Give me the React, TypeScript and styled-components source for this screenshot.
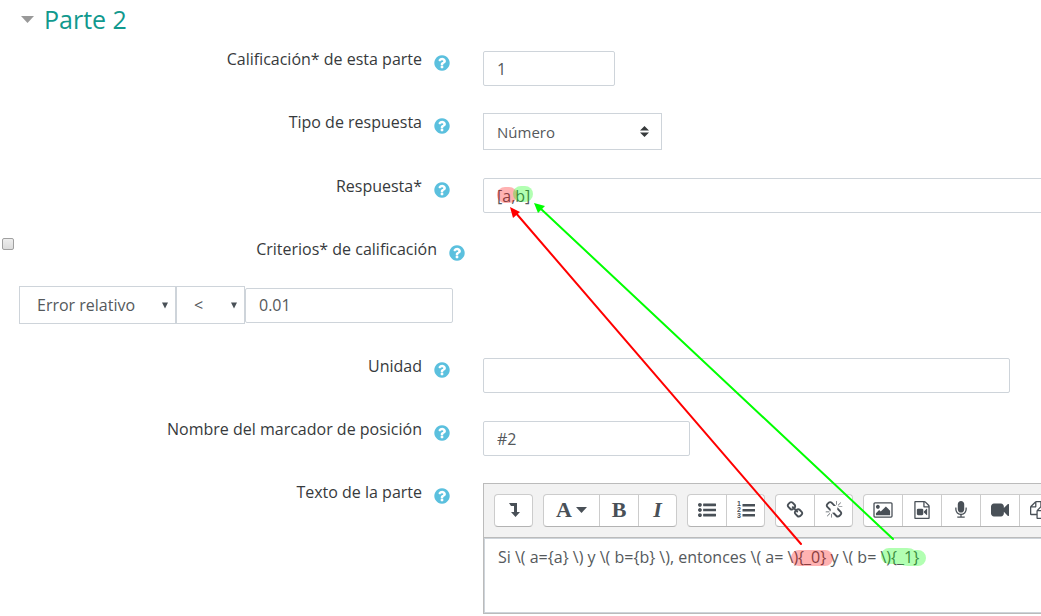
import React from "react";
import styled, { createGlobalStyle } from "styled-components";

const GlobalStyle = createGlobalStyle`
  *, *::before, *::after { box-sizing: border-box; }
  body {
    margin: 0;
    background: #fff;
    color: #373a3c;
    font: 16px/24px "Open Sans", sans-serif;
    overflow: hidden;
  }
`;

const Page = styled.main`
  position: relative;
  overflow: hidden;
  padding-bottom: 3px;
`;

const SectionTitle = styled.h3`
  margin: 0;
  font-size: 25px;
  line-height: 38px;
  font-weight: 400;
`;

const SectionToggle = styled.a`
  display: flex;
  align-items: center;
  gap: 10px;
  padding-left: 21px;
  color: #11998e;
  text-decoration: none;
`;

const Fields = styled.form`
  display: flex;
  flex-direction: column;
  gap: 25px;
  padding-top: 10px;
`;

const Row = styled.div`
  display: grid;
  grid-template-columns: 450px minmax(0, 1fr);
  column-gap: 33px;
  align-items: start;
`;

const LabelCell = styled.div`
  display: flex;
  justify-content: flex-end;
  gap: 12px;
`;

const Label = styled.label`
  line-height: 22px;
`;

const HelpButton = styled.button`
  display: flex;
  width: 16px;
  height: 24px;
  margin: 3px 0 0;
  padding: 0;
  border: 0;
  background: none;
  align-items: center;
  justify-content: center;
  color: #5bc0de;
`;

const Control = styled.div<{ $bleed?: boolean }>`
  display: flex;
  align-items: flex-end;
  min-height: 38px;
  padding-top: 2px;
  margin-right: ${(p) => (p.$bleed ? "-24px" : "0")};
`;

const TextInput = styled.input<{ $width: string }>`
  width: ${(p) => p.$width};
  max-width: 100%;
  height: 35px;
  padding: 0 13px;
  border: 1px solid #ced4da;
  border-radius: 2px;
  background: #fff;
  color: #55595c;
  font: 16px "Open Sans", sans-serif;
`;

const SelectWrap = styled.div<{ $width: string }>`
  display: grid;
  grid-template-columns: minmax(0, 1fr);
  align-items: center;
  width: ${(p) => p.$width};

  > * { grid-area: 1 / 1; }
  > svg { justify-self: end; pointer-events: none; }
`;

const Select = styled.select<{ $pad: number }>`
  appearance: none;
  width: 100%;
  height: 37px;
  padding: 0 ${(p) => p.$pad}px;
  border: 1px solid #ced4da;
  border-radius: 0;
  background: #fff;
  color: #55595c;
  font: 15px "Open Sans", sans-serif;
`;

const PlainSelect = styled(Select)`
  height: 38px;
  font-size: 16px;
`;

const SortMark = styled.svg`
  margin-right: 13px;
`;

const DropMark = styled.svg<{ $right: number }>`
  margin-right: ${(p) => p.$right}px;
`;

const Criteria = styled.div`
  display: flex;
  flex-direction: column;
  gap: 24px;
  padding-bottom: 6px;
`;

const CriteriaHead = styled.div`
  display: flex;
  justify-content: space-between;
  align-items: flex-start;
  width: 465px;
  height: 24px;
  padding-left: 2px;
`;

const Tick = styled.input`
  appearance: none;
  width: 12px;
  height: 12px;
  margin: 0;
  border: 1px solid #a0a0a0;
  border-radius: 2px;
  background: linear-gradient(#eee, #dcdcdc);
`;

const CriteriaFields = styled.div`
  display: flex;
  align-items: center;
  padding-left: 19px;
`;

const Editor = styled.div`
  width: 100%;
  border: 1px solid #bbb;
`;

const Toolbar = styled.div`
  display: flex;
  gap: 10px;
  padding: 10px 0 10px 10px;
  border-bottom: 1px solid #bbb;
  background: #f2f2f2;
  overflow: hidden;
`;

const ToolGroup = styled.div`
  display: flex;
  flex: none;
  border: 1px solid #ccc;
  border-bottom-color: #b3b3b3;
  border-radius: 4px;
  background: #fff;
`;

const Tool = styled.button<{ $wide?: boolean }>`
  display: flex;
  align-items: center;
  justify-content: center;
  gap: 4px;
  box-sizing: content-box;
  width: ${(p) => (p.$wide ? 55 : 38)}px;
  height: 29px;
  padding: 0 0 2px;
  border: 0;
  background: none;
  color: #495057;

  &:last-child { width: 37px; }
  & + & { border-left: 1px solid #ccc; }
`;

const Letter = styled.span<{ $italic?: boolean }>`
  font: bold 22px/24px "Liberation Serif", serif;
  font-style: ${(p) => (p.$italic ? "italic" : "normal")};
`;

const EditArea = styled.div`
  height: 75px;
  padding: 6px 13px;
  border: 1px solid #ced4da;
  color: #55595c;
  line-height: 24px;
  white-space: nowrap;
  overflow: hidden;
`;

const Annotations = styled.svg`
  position: absolute;
  left: 0;
  top: 0;
  pointer-events: none;
`;

const PATHS = {
  help: "M1024 1376v-192q0-14-9-23t-23-9h-192q-14 0-23 9t-9 23v192q0 14 9 23t23 9h192q14 0 23-9t9-23zm256-672q0-88-55.5-163t-138.5-116-170-41q-243 0-371 213-15 24 8 42l132 100q7 6 19 6 16 0 25-12 53-68 86-92 34-24 86-24 48 0 85.5 26t37.5 59q0 38-20 61t-68 45q-63 28-115.5 86.5t-52.5 125.5v36q0 14 9 23t23 9h192q14 0 23-9t9-23q0-19 21.5-49.5t54.5-49.5q32-18 49-28.5t46-35 44.5-48 28-60.5 12.5-81zm384 192q0 209-103 385.5t-279.5 279.5-385.5 103-385.5-103-279.5-279.5-103-385.5 103-385.5 279.5-279.5 385.5-103 385.5 103 279.5 279.5 103 385.5z",
  bullets: "M384 1408q0 80-56 136t-136 56-136-56-56-136 56-136 136-56 136 56 56 136zm0-512q0 80-56 136t-136 56-136-56-56-136 56-136 136-56 136 56 56 136zm1408 416v192q0 13-9.5 22.5t-22.5 9.5h-1216q-13 0-22.5-9.5t-9.5-22.5v-192q0-13 9.5-22.5t22.5-9.5h1216q13 0 22.5 9.5t9.5 22.5zm-1408-928q0 80-56 136t-136 56-136-56-56-136 56-136 136-56 136 56 56 136zm1408 416v192q0 13-9.5 22.5t-22.5 9.5h-1216q-13 0-22.5-9.5t-9.5-22.5v-192q0-13 9.5-22.5t22.5-9.5h1216q13 0 22.5 9.5t9.5 22.5zm0-512v192q0 13-9.5 22.5t-22.5 9.5h-1216q-13 0-22.5-9.5t-9.5-22.5v-192q0-13 9.5-22.5t22.5-9.5h1216q13 0 22.5 9.5t9.5 22.5z",
  link: "M1520 1216q0-40-28-68l-208-208q-28-28-68-28-42 0-72 32 3 3 19 18.5t21.5 21.5 15 19 13 25.5 3.5 27.5q0 40-28 68t-68 28q-15 0-27.5-3.5t-25.5-13-19-15-21.5-21.5-18.5-19q-33 31-33 73 0 40 28 68l206 207q27 27 68 27 40 0 68-26l147-146q28-28 28-67zm-703-705q0-40-28-68l-206-207q-28-28-68-28-39 0-68 27l-147 146q-28 28-28 67 0 40 28 68l208 208q27 27 68 27 42 0 72-31-3-3-19-18.5t-21.5-21.5-15-19-13-25.5-3.5-27.5q0-40 28-68t68-28q15 0 27.5 3.5t25.5 13 19 15 21.5 21.5 18.5 19q33-31 33-73zm895 705q0 120-85 203l-147 146q-83 83-203 83-121 0-204-85l-206-207q-83-83-83-203 0-123 88-209l-88-88q-86 88-208 88-120 0-204-84l-208-208q-84-84-84-204t85-203l147-146q83-83 203-83 121 0 204 85l206 207q83 83 83 203 0 123-88 209l88 88q86-88 208-88 120 0 204 84l208 208q84 84 84 204z",
  unlink: "M503 1271l-256 256q-10 9-23 9-12 0-23-9-9-10-9-23t9-23l256-256q10-9 23-9t23 9q9 10 9 23t-9 23zm169 41v320q0 14-9 23t-23 9-23-9-9-23v-320q0-14 9-23t23-9 23 9 9 23zm-224-224q0 14-9 23t-23 9h-320q-14 0-23-9t-9-23 9-23 23-9h320q14 0 23 9t9 23zm1264 128q0 120-85 203l-147 146q-83 83-203 83-121 0-204-85l-334-335q-21-21-42-56l239-18 273 274q28 28 68 27.5t68-27.5l147-146q28-28 28-67 0-40-28-68l-274-275 18-239q35 21 56 42l336 336q84 86 84 204zm-617-724l-239 18-273-274q-28-28-68-28-39 0-68 27l-147 146q-28 28-28 67 0 40 28 68l274 274-18 240q-35-21-56-42l-336-336q-84-86-84-204 0-120 85-203l147-146q83-83 203-83 121 0 204 85l334 335q21 21 42 56zm633 84q0 14-9 23t-23 9h-320q-14 0-23-9t-9-23 9-23 23-9h320q14 0 23 9t9 23zm-544-544v320q0 14-9 23t-23 9-23-9-9-23v-320q0-14 9-23t23-9 23 9 9 23zm407 151l-256 256q-11 9-23 9t-23-9q-9-10-9-23t9-23l256-256q10-9 23-9t23 9q9 10 9 23t-9 23z",
  picture: "M576 576q0 80-56 136t-136 56-136-56-56-136 56-136 136-56 136 56 56 136zm1024 384v448h-1408v-192l320-320 160 160 512-512zm96-704h-1600q-13 0-22.5 9.5t-9.5 22.5v1216q0 13 9.5 22.5t22.5 9.5h1600q13 0 22.5-9.5t9.5-22.5v-1216q0-13-9.5-22.5t-22.5-9.5zm160 32v1216q0 66-47 113t-113 47h-1600q-66 0-113-47t-47-113v-1216q0-66 47-113t113-47h1600q66 0 113 47t47 113z",
  mediaFile: "M1596 380q28 28 48 76t20 88v1152q0 40-28 68t-68 28h-1344q-40 0-68-28t-28-68v-1600q0-40 28-68t68-28h896q40 0 88 20t76 48zm-444-244v376h376q-10-29-22-41l-313-313q-12-12-41-22zm384 1528v-1024h-416q-40 0-68-28t-28-68v-416h-768v1536h1280zm-640-896q52 0 90 38t38 90v384q0 52-38 90t-90 38h-384q-52 0-90-38t-38-90v-384q0-52 38-90t90-38h384zm492 2q20 8 20 30v576q0 22-20 30-8 2-12 2-14 0-23-9l-265-266v-90l265-266q9-9 23-9 4 0 12 2z",
  microphone: "M1472 704v128q0 221-147.5 384.5t-364.5 187.5v132h256q26 0 45 19t19 45-19 45-45 19h-640q-26 0-45-19t-19-45 19-45 45-19h256v-132q-217-24-364.5-187.5t-147.5-384.5v-128q0-26 19-45t45-19 45 19 19 45v128q0 185 131.5 316.5t316.5 131.5 316.5-131.5 131.5-316.5v-128q0-26 19-45t45-19 45 19 19 45zm-256-384v512q0 132-94 226t-226 94-226-94-94-226v-512q0-132 94-226t226-94 226 94 94 226z",
  camera: "M1792 352v1088q0 42-39 59-13 5-25 5-27 0-45-19l-403-403v166q0 119-84.5 203.5t-203.5 84.5h-704q-119 0-203.5-84.5t-84.5-203.5v-704q0-119 84.5-203.5t203.5-84.5h704q119 0 203.5 84.5t84.5 203.5v165l403-402q18-19 45-19 12 0 25 5 39 17 39 59z",
  files: "M1696 384q40 0 68 28t28 68v1216q0 40-28 68t-68 28h-960q-40 0-68-28t-28-68v-288h-544q-40 0-68-28t-28-68v-672q0-40 20-88t48-76l408-408q28-28 76-48t88-20h416q40 0 68 28t28 68v328q68-40 128-40h416zm-544 213l-299 299h299v-299zm-640-384l-299 299h299v-299zm196 647l316-316v-416h-384v416q0 40-28 68t-68 28h-416v640h512v-256q0-40 20-88t48-76zm956 804v-1152h-384v416q0 40-28 68t-68 28h-416v640h896z",
};

function Icon({ name }: { name: keyof typeof PATHS }) {
  const wide = name === "picture";
  return (
    <svg
      width={wide ? 20 : 18}
      height={18}
      viewBox={wide ? "-100 0 1991 1792" : "0 0 1792 1792"}
      fill="currentColor"
      overflow="visible"
      aria-hidden="true"
    >
      <path d={PATHS[name]} />
    </svg>
  );
}

function FieldLabel({ htmlFor, id, children }: { htmlFor?: string; id?: string; children: string }) {
  return (
    <LabelCell>
      <Label htmlFor={htmlFor} id={id}>{children}</Label>
      <HelpButton type="button" aria-label={`Ayuda: ${children}`}>
        <Icon name="help" />
      </HelpButton>
    </LabelCell>
  );
}

function Triangle({ right }: { right: number }) {
  return (
    <DropMark $right={right} width="6" height="7" viewBox="0 0 6 7" aria-hidden="true">
      <path d="M0 0.5h6L3 6.5z" fill="#495057" />
    </DropMark>
  );
}

export default function App() {
  return (
    <Page>
      <GlobalStyle />
      <SectionTitle>
        <SectionToggle href="#parte-2">
          <svg width="13" height="7" viewBox="0 0 13 7" aria-hidden="true">
            <path d="M0 0h13L6.500 7z" fill="#999" />
          </svg>
          Parte 2
        </SectionToggle>
      </SectionTitle>

      <Fields id="parte-2">
        <Row>
          <FieldLabel htmlFor="grade">Calificación* de esta parte</FieldLabel>
          <Control>
            <TextInput id="grade" $width="132px" defaultValue="1" />
          </Control>
        </Row>

        <Row>
          <FieldLabel htmlFor="type">Tipo de respuesta</FieldLabel>
          <Control>
            <SelectWrap $width="179px">
              <Select id="type" $pad={13}>
                <option>Número</option>
              </Select>
              <SortMark width="9" height="11" viewBox="0 0 9 11" aria-hidden="true">
                <path d="M0 4.500L4.500 0 9 4.500zM0 6.500h9L4.500 11z" fill="#373a3c" />
              </SortMark>
            </SelectWrap>
          </Control>
        </Row>

        <Row>
          <FieldLabel htmlFor="answer">Respuesta*</FieldLabel>
          <Control $bleed>
            <TextInput id="answer" $width="100%" defaultValue="[a,b]" />
          </Control>
        </Row>

        <Criteria>
          <CriteriaHead>
            <Tick type="checkbox" aria-label="Modo avanzado" />
            <FieldLabel htmlFor="criterion">Criterios* de calificación</FieldLabel>
          </CriteriaHead>
          <CriteriaFields>
            <SelectWrap $width="157px">
              <PlainSelect id="criterion" $pad={17}>
                <option>Error relativo</option>
              </PlainSelect>
              <Triangle right={8} />
            </SelectWrap>
            <SelectWrap $width="69px">
              <PlainSelect aria-label="Operador" $pad={17}>
                <option>&lt;</option>
              </PlainSelect>
              <Triangle right={8} />
            </SelectWrap>
            <TextInput aria-label="Tolerancia" $width="208px" defaultValue="0.01" />
          </CriteriaFields>
        </Criteria>

        <Row>
          <FieldLabel htmlFor="unit">Unidad</FieldLabel>
          <Control>
            <TextInput id="unit" $width="527px" />
          </Control>
        </Row>

        <Row>
          <FieldLabel htmlFor="placeholder">Nombre del marcador de posición</FieldLabel>
          <Control>
            <TextInput id="placeholder" $width="207px" defaultValue="#2" />
          </Control>
        </Row>

        <Row>
          <FieldLabel id="text-label">Texto de la parte</FieldLabel>
          <Control $bleed>
            <Editor>
              <Toolbar>
                <ToolGroup>
                  <Tool type="button" aria-label="Mostrar más botones">
                    <svg width="12" height="16" viewBox="0 0 12 16" fill="currentColor" aria-hidden="true">
                      <path d="M1 1h8v9h3L7.500 15 3 10h3V4H3z" />
                    </svg>
                  </Tool>
                </ToolGroup>
                <ToolGroup>
                  <Tool type="button" $wide aria-label="Estilos de párrafo">
                    <Letter>A</Letter>
                    <svg width="11" height="6" viewBox="0 0 11 6" fill="currentColor" aria-hidden="true">
                      <path d="M0 0h11L5.500 6z" />
                    </svg>
                  </Tool>
                  <Tool type="button" aria-label="Negrita"><Letter>B</Letter></Tool>
                  <Tool type="button" aria-label="Cursiva"><Letter $italic>I</Letter></Tool>
                </ToolGroup>
                <ToolGroup>
                  <Tool type="button" aria-label="Lista sin numerar"><Icon name="bullets" /></Tool>
                  <Tool type="button" aria-label="Lista numerada">
                    <svg width="18" height="18" viewBox="0 0 18 18" fill="currentColor" aria-hidden="true">
                      <path d="M5.500 3H18v2.500H5.500zM5.500 8H18v2.500H5.500zM5.500 13H18v2.500H5.500z" />
                      <g fontFamily="Liberation Sans, sans-serif" fontWeight="700" fontSize="7">
                        <text x="0" y="5">1</text>
                        <text x="0" y="11">2</text>
                        <text x="0" y="17">3</text>
                      </g>
                    </svg>
                  </Tool>
                </ToolGroup>
                <ToolGroup>
                  <Tool type="button" aria-label="Enlace"><Icon name="link" /></Tool>
                  <Tool type="button" aria-label="Quitar enlace"><Icon name="unlink" /></Tool>
                </ToolGroup>
                <ToolGroup>
                  <Tool type="button" aria-label="Imagen"><Icon name="picture" /></Tool>
                  <Tool type="button" aria-label="Multimedia"><Icon name="mediaFile" /></Tool>
                  <Tool type="button" aria-label="Grabar audio"><Icon name="microphone" /></Tool>
                  <Tool type="button" aria-label="Grabar vídeo"><Icon name="camera" /></Tool>
                  <Tool type="button" aria-label="Gestionar archivos"><Icon name="files" /></Tool>
                </ToolGroup>
              </Toolbar>
              <EditArea
                role="textbox"
                aria-labelledby="text-label"
                contentEditable
                suppressContentEditableWarning
              >
                {"Si \\( a={a} \\) y \\( b={b} \\), entonces \\( a= \\){_0} y \\( b= \\){_1}"}
              </EditArea>
            </Editor>
          </Control>
        </Row>
      </Fields>

      <Annotations width="1041" height="616" viewBox="0 0 1041 616" aria-hidden="true">
        <g fill="none" strokeLinecap="round" strokeWidth="16">
          <path d="M505 195h4" stroke="#f00" strokeOpacity="0.3" />
          <path d="M521 194h4" stroke="#0f0" strokeOpacity="0.3" />
          <path d="M799 558h26" stroke="#f00" strokeOpacity="0.3" />
        </g>
        <path d="M889 548h18q5 0 7 2h4a8 8 0 0 1 0 16h-10q-5 0-8-2h-11a8 8 0 0 1 0-16z" fill="#0f0" fillOpacity="0.3" />
        <g fill="none" strokeWidth="2" strokeLinecap="round">
          <path d="M801 544L515 212" stroke="#f00" />
          <path d="M893 539L540 208" stroke="#0f0" />
        </g>
        <path d="M510 207l10 5-7 6z" fill="#f00" />
        <path d="M534 203l11 3-7 7z" fill="#0f0" />
      </Annotations>
    </Page>
  );
}
